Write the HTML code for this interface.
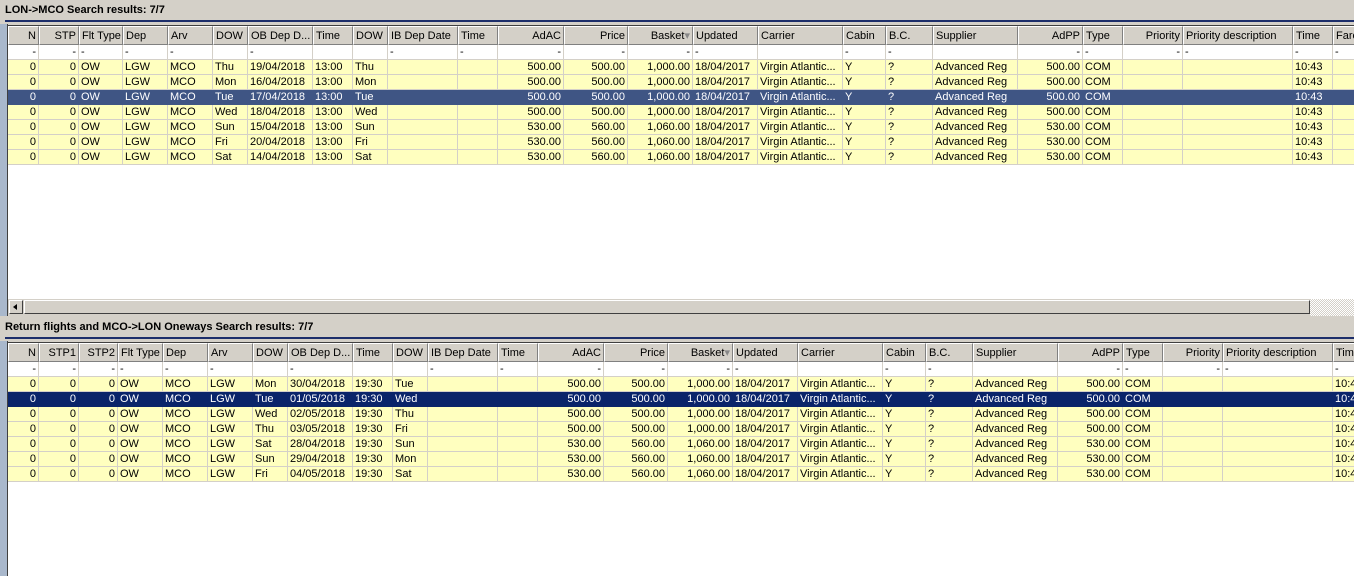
<!DOCTYPE html>
<html><head><meta charset="utf-8"><style>
*{margin:0;padding:0;box-sizing:border-box}
body{width:1354px;height:576px;overflow:hidden;background:#d4d0c8;font-family:"Liberation Sans",sans-serif;font-size:11px;color:#000;position:relative}
.title{position:absolute;left:0;width:1354px;height:20px;background:#d4d0c8;font-weight:bold;font-size:11px;padding:4px 0 0 5px}
.line{position:absolute;left:5px;width:1349px;height:2px;background:#1d2e6a}
.strip{position:absolute;left:0;width:8px;background:#a9b8cc;border-right:1px solid #404040}
.gridbox{position:absolute;left:8px;width:1346px;background:#fff;overflow:hidden;border-top:1px solid #404040}
table{border-collapse:separate;border-spacing:0;table-layout:fixed;width:1391px}
td{height:15px;padding:0 2px;border-right:1px solid #d4d0c8;border-bottom:1px solid #d4d0c8;white-space:nowrap;overflow:hidden;line-height:14px}
tr.h td{height:19px;background:#d4d0c8;border-top:1px solid #fff;border-left:1px solid #fff;border-right:1px solid #808080;border-bottom:1px solid #808080;line-height:16px}
tr.y td{background:#ffffbf}
tr.s1 td{background:#3f5584;color:#fff;border-color:#3f5584}
tr.s2 td{background:#0a246a;color:#fff;border-color:#0a246a}
.r{text-align:right}
.scroll{position:absolute;left:8px;top:298px;width:1346px;height:17px;background:#d4d0c8;border-top:1px solid #fff}
.btn{position:absolute;left:1px;top:1px;width:14px;height:14px;background:#d4d0c8;border:1px solid;border-color:#fff #404040 #404040 #fff}
.thumb{position:absolute;left:16px;top:1px;width:1286px;height:14px;background:#d4d0c8;border:1px solid;border-color:#fff #404040 #404040 #fff}
.hatch{position:absolute;left:1302px;top:0;width:44px;height:17px;background:repeating-conic-gradient(#fff 0 25%,#d4d0c8 0 50%) 0 0/2px 2px}
</style></head><body>
<div class="title" style="top:0">LON-&gt;MCO Search results: 7/7</div>
<div class="line" style="top:20px"></div>
<div class="strip" style="top:24px;height:292px"></div>
<div class="gridbox" style="top:25px;height:273px">
<table><colgroup><col style="width:31px"><col style="width:40px"><col style="width:44px"><col style="width:45px"><col style="width:45px"><col style="width:35px"><col style="width:65px"><col style="width:40px"><col style="width:35px"><col style="width:70px"><col style="width:40px"><col style="width:66px"><col style="width:64px"><col style="width:65px"><col style="width:65px"><col style="width:85px"><col style="width:43px"><col style="width:47px"><col style="width:85px"><col style="width:65px"><col style="width:40px"><col style="width:60px"><col style="width:110px"><col style="width:40px"><col style="width:66px"></colgroup>
<tr class="h"><td class="r">N</td><td class="r">STP</td><td>Flt Type</td><td>Dep</td><td>Arv</td><td>DOW</td><td>OB Dep D...</td><td>Time</td><td>DOW</td><td>IB Dep Date</td><td>Time</td><td class="r">AdAC</td><td class="r">Price</td><td class="r">Basket<span style="color:#888">▾</span></td><td>Updated</td><td>Carrier</td><td>Cabin</td><td>B.C.</td><td>Supplier</td><td class="r">AdPP</td><td>Type</td><td class="r">Priority</td><td>Priority description</td><td>Time</td><td>Fare</td></tr>
<tr><td class="r">-</td><td class="r">-</td><td>-</td><td>-</td><td>-</td><td></td><td>-</td><td></td><td></td><td>-</td><td>-</td><td class="r">-</td><td class="r">-</td><td class="r">-</td><td>-</td><td></td><td>-</td><td>-</td><td></td><td class="r">-</td><td>-</td><td class="r">-</td><td>-</td><td>-</td><td>-</td></tr>
<tr class="y"><td class="r">0</td><td class="r">0</td><td>OW</td><td>LGW</td><td>MCO</td><td>Thu</td><td>19/04/2018</td><td>13:00</td><td>Thu</td><td></td><td></td><td class="r">500.00</td><td class="r">500.00</td><td class="r">1,000.00</td><td>18/04/2017</td><td>Virgin Atlantic...</td><td>Y</td><td>?</td><td>Advanced Reg</td><td class="r">500.00</td><td>COM</td><td></td><td></td><td>10:43</td><td></td></tr>
<tr class="y"><td class="r">0</td><td class="r">0</td><td>OW</td><td>LGW</td><td>MCO</td><td>Mon</td><td>16/04/2018</td><td>13:00</td><td>Mon</td><td></td><td></td><td class="r">500.00</td><td class="r">500.00</td><td class="r">1,000.00</td><td>18/04/2017</td><td>Virgin Atlantic...</td><td>Y</td><td>?</td><td>Advanced Reg</td><td class="r">500.00</td><td>COM</td><td></td><td></td><td>10:43</td><td></td></tr>
<tr class="s1"><td class="r">0</td><td class="r">0</td><td>OW</td><td>LGW</td><td>MCO</td><td>Tue</td><td>17/04/2018</td><td>13:00</td><td>Tue</td><td></td><td></td><td class="r">500.00</td><td class="r">500.00</td><td class="r">1,000.00</td><td>18/04/2017</td><td>Virgin Atlantic...</td><td>Y</td><td>?</td><td>Advanced Reg</td><td class="r">500.00</td><td>COM</td><td></td><td></td><td>10:43</td><td></td></tr>
<tr class="y"><td class="r">0</td><td class="r">0</td><td>OW</td><td>LGW</td><td>MCO</td><td>Wed</td><td>18/04/2018</td><td>13:00</td><td>Wed</td><td></td><td></td><td class="r">500.00</td><td class="r">500.00</td><td class="r">1,000.00</td><td>18/04/2017</td><td>Virgin Atlantic...</td><td>Y</td><td>?</td><td>Advanced Reg</td><td class="r">500.00</td><td>COM</td><td></td><td></td><td>10:43</td><td></td></tr>
<tr class="y"><td class="r">0</td><td class="r">0</td><td>OW</td><td>LGW</td><td>MCO</td><td>Sun</td><td>15/04/2018</td><td>13:00</td><td>Sun</td><td></td><td></td><td class="r">530.00</td><td class="r">560.00</td><td class="r">1,060.00</td><td>18/04/2017</td><td>Virgin Atlantic...</td><td>Y</td><td>?</td><td>Advanced Reg</td><td class="r">530.00</td><td>COM</td><td></td><td></td><td>10:43</td><td></td></tr>
<tr class="y"><td class="r">0</td><td class="r">0</td><td>OW</td><td>LGW</td><td>MCO</td><td>Fri</td><td>20/04/2018</td><td>13:00</td><td>Fri</td><td></td><td></td><td class="r">530.00</td><td class="r">560.00</td><td class="r">1,060.00</td><td>18/04/2017</td><td>Virgin Atlantic...</td><td>Y</td><td>?</td><td>Advanced Reg</td><td class="r">530.00</td><td>COM</td><td></td><td></td><td>10:43</td><td></td></tr>
<tr class="y"><td class="r">0</td><td class="r">0</td><td>OW</td><td>LGW</td><td>MCO</td><td>Sat</td><td>14/04/2018</td><td>13:00</td><td>Sat</td><td></td><td></td><td class="r">530.00</td><td class="r">560.00</td><td class="r">1,060.00</td><td>18/04/2017</td><td>Virgin Atlantic...</td><td>Y</td><td>?</td><td>Advanced Reg</td><td class="r">530.00</td><td>COM</td><td></td><td></td><td>10:43</td><td></td></tr>
</table></div>
<div class="scroll"><div class="btn"><span style="position:absolute;left:3px;top:3px;width:0;height:0;border-top:3px solid transparent;border-bottom:3px solid transparent;border-right:4px solid #000"></span></div><div class="thumb"></div><div class="hatch"></div></div>

<div class="title" style="top:317px">Return flights and MCO-&gt;LON Oneways Search results: 7/7</div>
<div class="line" style="top:337px"></div>
<div class="strip" style="top:341px;height:235px"></div>
<div class="gridbox" style="top:342px;height:234px">
<table><colgroup><col style="width:31px"><col style="width:40px"><col style="width:39px"><col style="width:45px"><col style="width:45px"><col style="width:45px"><col style="width:35px"><col style="width:65px"><col style="width:40px"><col style="width:35px"><col style="width:70px"><col style="width:40px"><col style="width:66px"><col style="width:64px"><col style="width:65px"><col style="width:65px"><col style="width:85px"><col style="width:43px"><col style="width:47px"><col style="width:85px"><col style="width:65px"><col style="width:40px"><col style="width:60px"><col style="width:110px"><col style="width:66px"></colgroup>
<tr class="h"><td class="r">N</td><td class="r">STP1</td><td class="r">STP2</td><td>Flt Type</td><td>Dep</td><td>Arv</td><td>DOW</td><td>OB Dep D...</td><td>Time</td><td>DOW</td><td>IB Dep Date</td><td>Time</td><td class="r">AdAC</td><td class="r">Price</td><td class="r">Basket<span style="color:#888">▾</span></td><td>Updated</td><td>Carrier</td><td>Cabin</td><td>B.C.</td><td>Supplier</td><td class="r">AdPP</td><td>Type</td><td class="r">Priority</td><td>Priority description</td><td>Time</td></tr>
<tr><td class="r">-</td><td class="r">-</td><td class="r">-</td><td>-</td><td>-</td><td>-</td><td></td><td>-</td><td></td><td></td><td>-</td><td>-</td><td class="r">-</td><td class="r">-</td><td class="r">-</td><td>-</td><td></td><td>-</td><td>-</td><td></td><td class="r">-</td><td>-</td><td class="r">-</td><td>-</td><td>-</td></tr>
<tr class="y"><td class="r">0</td><td class="r">0</td><td class="r">0</td><td>OW</td><td>MCO</td><td>LGW</td><td>Mon</td><td>30/04/2018</td><td>19:30</td><td>Tue</td><td></td><td></td><td class="r">500.00</td><td class="r">500.00</td><td class="r">1,000.00</td><td>18/04/2017</td><td>Virgin Atlantic...</td><td>Y</td><td>?</td><td>Advanced Reg</td><td class="r">500.00</td><td>COM</td><td></td><td></td><td>10:43</td></tr>
<tr class="s2"><td class="r">0</td><td class="r">0</td><td class="r">0</td><td>OW</td><td>MCO</td><td>LGW</td><td>Tue</td><td>01/05/2018</td><td>19:30</td><td>Wed</td><td></td><td></td><td class="r">500.00</td><td class="r">500.00</td><td class="r">1,000.00</td><td>18/04/2017</td><td>Virgin Atlantic...</td><td>Y</td><td>?</td><td>Advanced Reg</td><td class="r">500.00</td><td>COM</td><td></td><td></td><td>10:43</td></tr>
<tr class="y"><td class="r">0</td><td class="r">0</td><td class="r">0</td><td>OW</td><td>MCO</td><td>LGW</td><td>Wed</td><td>02/05/2018</td><td>19:30</td><td>Thu</td><td></td><td></td><td class="r">500.00</td><td class="r">500.00</td><td class="r">1,000.00</td><td>18/04/2017</td><td>Virgin Atlantic...</td><td>Y</td><td>?</td><td>Advanced Reg</td><td class="r">500.00</td><td>COM</td><td></td><td></td><td>10:43</td></tr>
<tr class="y"><td class="r">0</td><td class="r">0</td><td class="r">0</td><td>OW</td><td>MCO</td><td>LGW</td><td>Thu</td><td>03/05/2018</td><td>19:30</td><td>Fri</td><td></td><td></td><td class="r">500.00</td><td class="r">500.00</td><td class="r">1,000.00</td><td>18/04/2017</td><td>Virgin Atlantic...</td><td>Y</td><td>?</td><td>Advanced Reg</td><td class="r">500.00</td><td>COM</td><td></td><td></td><td>10:43</td></tr>
<tr class="y"><td class="r">0</td><td class="r">0</td><td class="r">0</td><td>OW</td><td>MCO</td><td>LGW</td><td>Sat</td><td>28/04/2018</td><td>19:30</td><td>Sun</td><td></td><td></td><td class="r">530.00</td><td class="r">560.00</td><td class="r">1,060.00</td><td>18/04/2017</td><td>Virgin Atlantic...</td><td>Y</td><td>?</td><td>Advanced Reg</td><td class="r">530.00</td><td>COM</td><td></td><td></td><td>10:43</td></tr>
<tr class="y"><td class="r">0</td><td class="r">0</td><td class="r">0</td><td>OW</td><td>MCO</td><td>LGW</td><td>Sun</td><td>29/04/2018</td><td>19:30</td><td>Mon</td><td></td><td></td><td class="r">530.00</td><td class="r">560.00</td><td class="r">1,060.00</td><td>18/04/2017</td><td>Virgin Atlantic...</td><td>Y</td><td>?</td><td>Advanced Reg</td><td class="r">530.00</td><td>COM</td><td></td><td></td><td>10:43</td></tr>
<tr class="y"><td class="r">0</td><td class="r">0</td><td class="r">0</td><td>OW</td><td>MCO</td><td>LGW</td><td>Fri</td><td>04/05/2018</td><td>19:30</td><td>Sat</td><td></td><td></td><td class="r">530.00</td><td class="r">560.00</td><td class="r">1,060.00</td><td>18/04/2017</td><td>Virgin Atlantic...</td><td>Y</td><td>?</td><td>Advanced Reg</td><td class="r">530.00</td><td>COM</td><td></td><td></td><td>10:43</td></tr>
</table></div>
</body></html>
